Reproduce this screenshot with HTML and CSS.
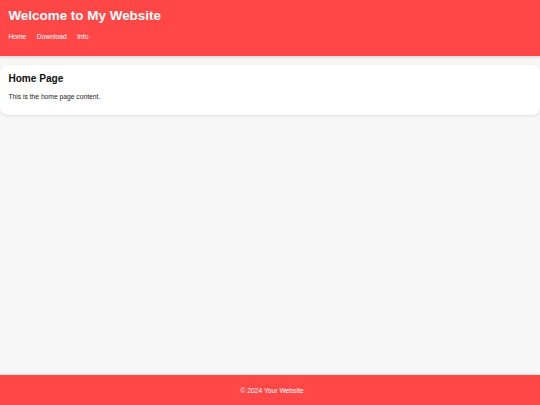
FILE: index.html
```html
<!DOCTYPE html>
<html>
    <head>
        <title>My Website</title>
        <link rel="stylesheet" href="styles.css">
    </head>

    <body>
        <!--Top bar with site title and links-->
        <div class="HEADER">
            <h1 class="SITE_TITLE">Welcome to My Website</h1>
            <div class="NAV">
                <a href="#">Home</a>
                <a href="#">Download</a>
                <a href="#">Info</a>
            </div>
        </div>

        <!--Page content-->
        <div class="MAIN">
            <div class="CARD">
                <h2 class="CARD_TITLE">Home Page</h2>
                <p class="CARD_TEXT">This is the home page content.</p>
            </div>
        </div>

        <div class="FOOTER">
            &copy; 2024 Your Website
        </div>
    </body>
</html>
```

FILE: styles.css
```css
/*Site red: #FF4747*/
/*Page gray: #F7F7F7*/
html, body {
    height: 100%;
}
body {
    margin: 0;
    display: flex;
    flex-direction: column;
    font-family: "Liberation Sans", Arial, sans-serif;
    font-size: 6.72px;
    background-color: #F7F7F7;
    color: #222;
}
/*Set up title bar*/
.HEADER {
    padding: 8px 8.4px 15.5px 8.4px;
    background-color: #FF4747;
    color: white;
    box-shadow: 0 1px 3px rgba(0, 0, 0, 0.15);
}
.SITE_TITLE {
    margin: 0;
    font-size: 13.44px;
    font-weight: bold;
}
.NAV {
    display: flex;
    gap: 10.5px;
    margin-top: 10.4px;
}
.NAV a {
    color: white;
    text-decoration: none;
}
/*Set up content card*/
.MAIN {
    flex: 1;
    padding-top: 9px;
}
.CARD {
    padding: 8px 8.4px 15px 8.4px;
    background-color: white;
    border-radius: 8px;
    box-shadow: 0 1px 3px rgba(0, 0, 0, 0.1);
}
.CARD_TITLE {
    margin: 0;
    font-size: 10.08px;
    font-weight: bold;
    color: #111;
}
.CARD_TEXT {
    margin: 8.8px 0 0 0;
}
.FOOTER {
    height: 30px;
    padding-left: 4px;
    display: flex;
    align-items: center;
    justify-content: center;
    background-color: #FF4747;
    color: white;
    box-shadow: 0 -1px 2px rgba(0, 0, 0, 0.1);
}
```
